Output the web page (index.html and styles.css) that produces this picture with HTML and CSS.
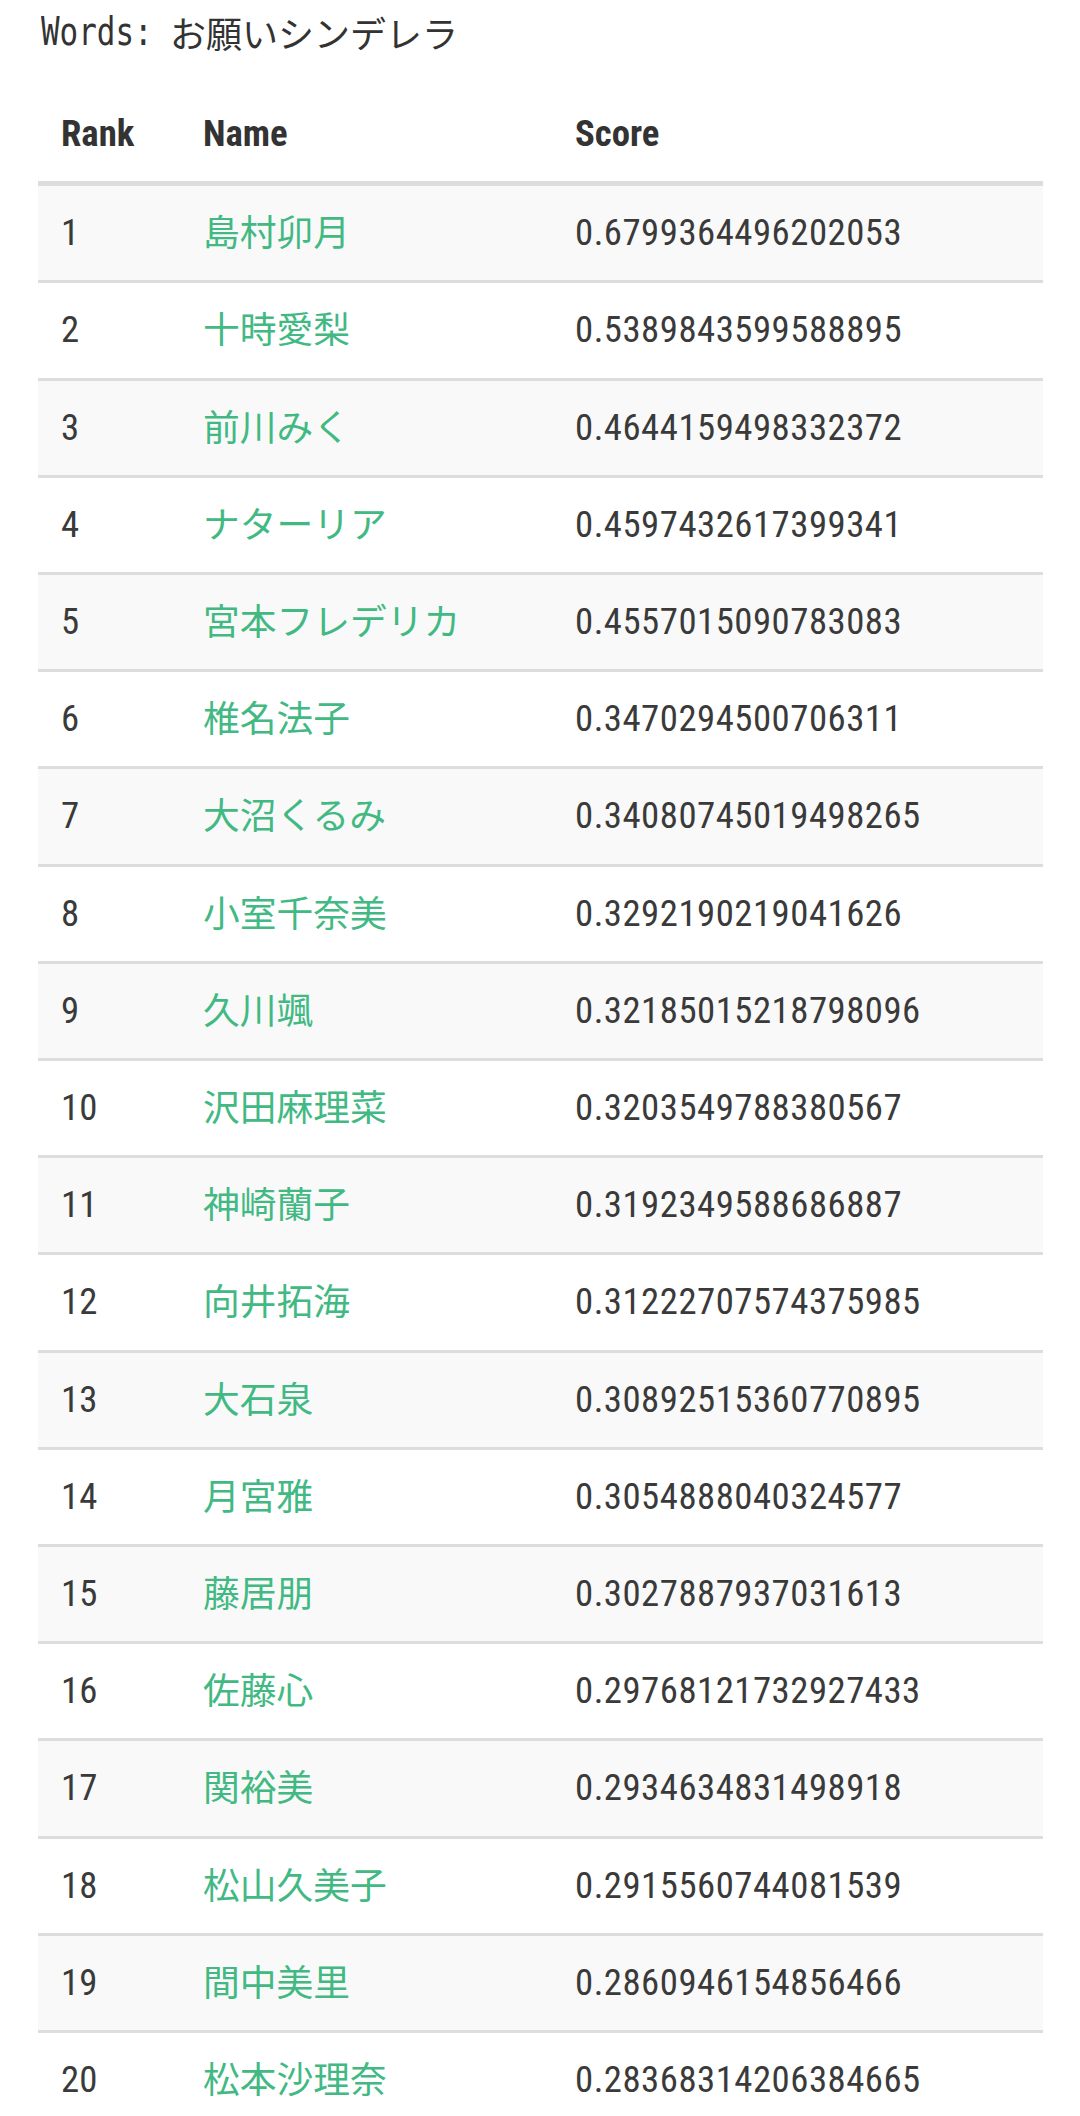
FILE: index.html
```html
<!DOCTYPE html>
<html lang="ja">
<head>
<meta charset="utf-8">
<title>Ranking</title>
<link rel="stylesheet" href="styles.css">
</head>
<body>
<div class="page">
  <div class="words"><span class="label">Words: </span><span class="query">お願いシンデレラ</span></div>
  <table class="ranking">
    <thead>
      <tr><th class="col-rank">Rank</th><th class="col-name">Name</th><th class="col-score">Score</th></tr>
    </thead>
    <tbody>
      <tr><td>1</td><td class="name"><a href="#">島村卯月</a></td><td class="score">0.6799364496202053</td></tr>
      <tr><td>2</td><td class="name"><a href="#">十時愛梨</a></td><td class="score">0.5389843599588895</td></tr>
      <tr><td>3</td><td class="name"><a href="#">前川みく</a></td><td class="score">0.4644159498332372</td></tr>
      <tr><td>4</td><td class="name"><a href="#">ナターリア</a></td><td class="score">0.4597432617399341</td></tr>
      <tr><td>5</td><td class="name"><a href="#">宮本フレデリカ</a></td><td class="score">0.4557015090783083</td></tr>
      <tr><td>6</td><td class="name"><a href="#">椎名法子</a></td><td class="score">0.3470294500706311</td></tr>
      <tr><td>7</td><td class="name"><a href="#">大沼くるみ</a></td><td class="score">0.34080745019498265</td></tr>
      <tr><td>8</td><td class="name"><a href="#">小室千奈美</a></td><td class="score">0.3292190219041626</td></tr>
      <tr><td>9</td><td class="name"><a href="#">久川颯</a></td><td class="score">0.32185015218798096</td></tr>
      <tr><td>10</td><td class="name"><a href="#">沢田麻理菜</a></td><td class="score">0.3203549788380567</td></tr>
      <tr><td>11</td><td class="name"><a href="#">神崎蘭子</a></td><td class="score">0.3192349588686887</td></tr>
      <tr><td>12</td><td class="name"><a href="#">向井拓海</a></td><td class="score">0.31222707574375985</td></tr>
      <tr><td>13</td><td class="name"><a href="#">大石泉</a></td><td class="score">0.30892515360770895</td></tr>
      <tr><td>14</td><td class="name"><a href="#">月宮雅</a></td><td class="score">0.3054888040324577</td></tr>
      <tr><td>15</td><td class="name"><a href="#">藤居朋</a></td><td class="score">0.3027887937031613</td></tr>
      <tr><td>16</td><td class="name"><a href="#">佐藤心</a></td><td class="score">0.29768121732927433</td></tr>
      <tr><td>17</td><td class="name"><a href="#">関裕美</a></td><td class="score">0.2934634831498918</td></tr>
      <tr><td>18</td><td class="name"><a href="#">松山久美子</a></td><td class="score">0.2915560744081539</td></tr>
      <tr><td>19</td><td class="name"><a href="#">間中美里</a></td><td class="score">0.2860946154856466</td></tr>
      <tr><td>20</td><td class="name"><a href="#">松本沙理奈</a></td><td class="score">0.28368314206384665</td></tr>
    </tbody>
  </table>
</div>
</body>
</html>
```
FILE: styles.css
```css
html, body {
  margin: 0;
  padding: 0;
  background: #ffffff;
  color: #333333;
}

.page {
  padding: 0 37px 0 38px;
}

.words {
  box-sizing: border-box;
  height: 87px;
  padding: 8px 0 0 3px;
  font-family: "DejaVu Sans Mono", "Noto Sans CJK JP", monospace;
  font-size: 34px;
  line-height: 48px;
  color: #333333;
  white-space: nowrap;
  overflow: hidden;
}

.words .label {
  display: inline-block;
  vertical-align: top;
  white-space: pre;
  font-size: 39px;
  line-height: 48px;
  transform: scaleX(0.792);
  transform-origin: left center;
  margin-right: -35.5px;
}

.words .query {
  display: inline-block;
  vertical-align: top;
  font-family: "Noto Sans CJK JP", sans-serif;
  font-size: 36px;
  line-height: 48px;
}

.ranking {
  width: 100%;
  border-collapse: separate;
  border-spacing: 0;
  table-layout: fixed;
  font-family: "Liberation Sans Narrow", "Roboto Condensed", "Noto Sans CJK JP", sans-serif;
  font-size: 36.75px;
  line-height: 52.2px;
}

.ranking th {
  text-align: left;
  font-weight: bold;
  padding: 21px;
  border-bottom: 5px solid #dddddd;
}

.ranking .col-rank {
  width: 144px;
  box-sizing: border-box;
  padding-left: 23px;
}

.ranking .col-name {
  width: 372px;
  box-sizing: border-box;
}

.ranking td {
  padding: 21px;
  height: 52.2px;
  border-top: 3px solid #dddddd;
  white-space: nowrap;
  color: #3a3a3a;
}

.ranking td:first-child {
  padding-left: 23px;
}

.ranking tbody tr:first-child td {
  border-top: 0;
}

.ranking tbody tr:nth-child(odd) td {
  background: #f9f9f9;
}

.ranking .name a {
  display: inline-block;
  vertical-align: top;
  height: 52.2px;
  line-height: 46px;
  color: #42b983;
  text-decoration: none;
  font-family: "Noto Sans CJK JP", sans-serif;
}

.ranking .score {
  letter-spacing: 0.5px;
}
```
